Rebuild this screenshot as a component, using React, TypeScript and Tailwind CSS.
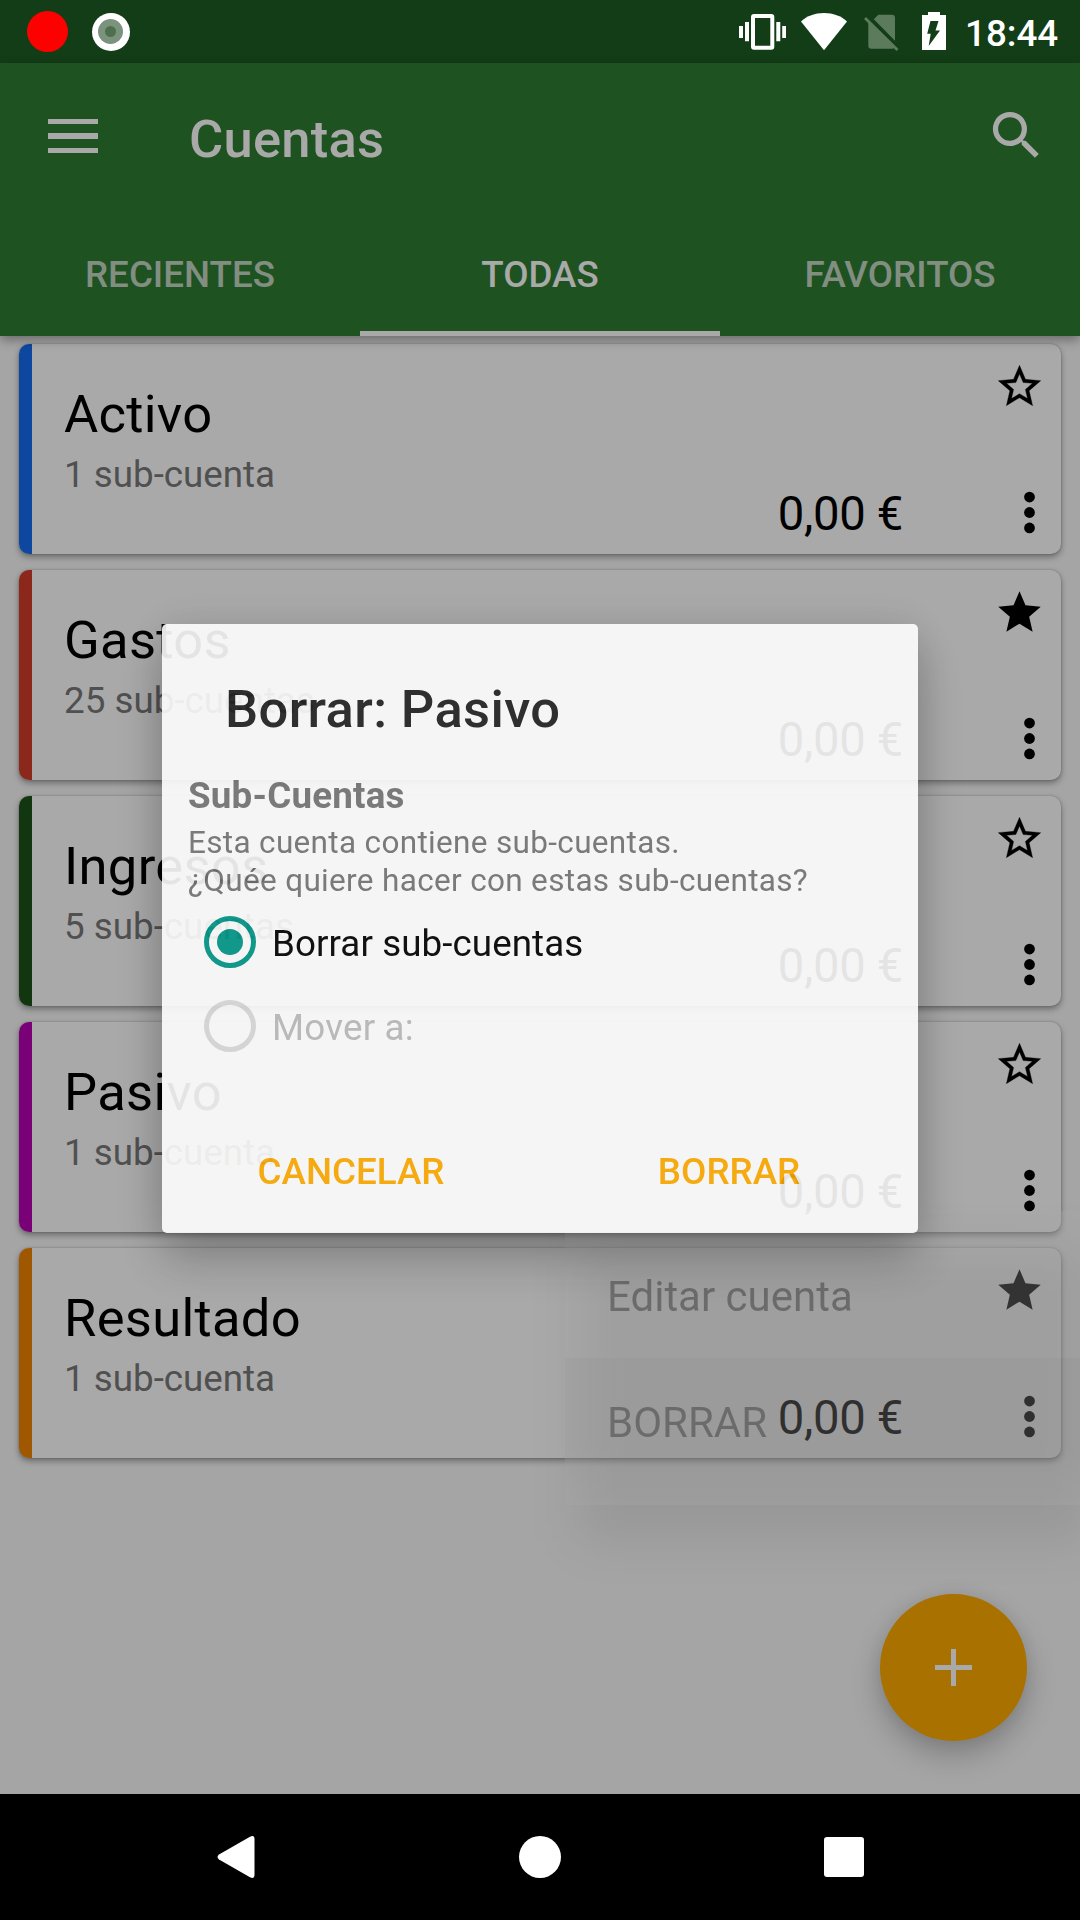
import React from "react";

type Account = {
  name: string;
  sub: string;
  bar: string;
  favorite: boolean;
};

const accounts: Account[] = [
  { name: "Activo", sub: "1 sub-cuenta", bar: "bg-[#0e479f]", favorite: false },
  { name: "Gastos", sub: "25 sub-cuentas", bar: "bg-[#8b281b]", favorite: true },
  { name: "Ingresos", sub: "5 sub-cuentas", bar: "bg-[#12360f]", favorite: false },
  { name: "Pasivo", sub: "1 sub-cuenta", bar: "bg-[#7a0077]", favorite: false },
  { name: "Resultado", sub: "1 sub-cuenta", bar: "bg-[#a05800]", favorite: true },
];

function StatusBar() {
  return (
    <div className="flex h-[63px] items-start bg-[#133d16]">
      <div className="ml-[27px] mt-[11px] size-[41px] rounded-full bg-[#ff0000]" />
      <div className="ml-[23.500px] mt-[12.500px] flex size-[38px] items-center justify-center rounded-full bg-white">
        <div className="flex size-[25px] items-center justify-center rounded-full bg-[#7b927c]">
          <div className="size-[11px] rounded-full bg-[#4e6f4e]" />
        </div>
      </div>
      <svg className="ml-[609.500px] mt-[13px] h-[38px] w-[47px] shrink-0" viewBox="739 13 47 38" fill="#fff">
        <path fillRule="evenodd" d="M754 14h17.300a3 3 0 0 1 3 3v29.700a3 3 0 0 1-3 3h-17.300a3 3 0 0 1-3-3V17a3 3 0 0 1 3-3zM755 18v27.700h15.300V18z" />
        <path d="M745 22h4v19.300h-4zM739 26h4v12h-4zM776.300 22h4v19.300h-4zM782.200 26h4v12h-4z" />
      </svg>
      <svg className="ml-[15px] mt-[13px] h-[38px] w-[46px] shrink-0" viewBox="801 13 46 38" fill="#fff">
        <path d="M824 50.300L801 21.400C807 16 815 13 824 13s17 3 23 8.400z" />
      </svg>
      <svg className="ml-[17px] mt-[13px] h-[39px] w-[35px] shrink-0" viewBox="864 13 35 39" fill="#5c7b5d">
        <path d="M873.800 19.200L878.300 14.700H892a3 3 0 0 1 3 3v23zM868.300 22.300L894.200 47.700a3 3 0 0 1-2.200 1H871.300a3 3 0 0 1-3-3z" />
        <path d="M864 18.900L866 16.900L898.500 49L896.500 51z" />
      </svg>
      <svg className="ml-[23px] mt-[12px] h-[38px] w-[24px] shrink-0" viewBox="922 12 24 38">
        <path fill="#fff" d="M928 12h12v3h6v35h-24V15h6z" />
        <path fill="#133d16" d="M930.500 21h8l-3 9.500h4.500l-11.300 15.500l2-12.300h-3.500z" />
      </svg>
      <span className="ml-[19px] w-[100px] whitespace-nowrap text-[36.750px] leading-[67px] font-medium text-white">18:44</span>
    </div>
  );
}

function Toolbar() {
  return (
    <header className="relative z-10 h-[273px] bg-[#1f5221] text-[#a9a9a9] shadow-[0_4px_10px_rgba(0,0,0,0.35)]">
      <div className="flex h-[153px] items-start">
        <div className="ml-[48px] mt-[56px] flex flex-col gap-[9px]">
          <div className="h-[5.300px] w-[49.500px] bg-[#a9a9a9]" />
          <div className="h-[5.300px] w-[49.500px] bg-[#a9a9a9]" />
          <div className="h-[5.300px] w-[49.500px] bg-[#a9a9a9]" />
        </div>
        <h1 className="ml-[91.500px] text-[52.500px] leading-[152px] font-medium tracking-[0.250px]">Cuentas</h1>
        <svg className="mr-[32px] mt-[41px] ml-auto size-[63px]" viewBox="0 0 24 24" fill="currentColor">
          <path d="M15.500 14h-.79l-.28-.27A6.471 6.471 0 0 0 16 9.500 6.500 6.500 0 1 0 9.500 16c1.610 0 3.090-.59 4.230-1.570l.27.28v.79l5 4.990L20.490 19l-4.990-5zm-6 0C7.010 14 5 11.990 5 9.500S7.010 5 9.500 5 14 7.010 14 9.500 11.990 14 9.500 14z" />
        </svg>
      </div>
      <nav className="grid h-[120px] grid-cols-3 grid-rows-[120px] text-center text-[36.750px] leading-[117px] font-medium">
        <div className="text-[#818e81]">RECIENTES</div>
        <div className="border-b-[5px] border-[#a9a9a9]">TODAS</div>
        <div className="text-[#818e81]">FAVORITOS</div>
      </nav>
    </header>
  );
}

function Star({ filled }: { filled: boolean }) {
  return (
    <svg className="size-[51px]" viewBox="0 0 24 24" fill="#000">
      {filled ? (
        <path d="M12 17.270L18.180 21l-1.640-7.030L22 9.240l-7.190-.61L12 2 9.190 8.630 2 9.240l5.460 4.730L5.820 21z" />
      ) : (
        <path
          stroke="#000"
          strokeWidth="0.150"
          d="M22 9.240l-7.190-.62L12 2 9.190 8.630 2 9.240l5.460 4.730L5.820 21 12 17.270 18.180 21l-1.630-7.030L22 9.240zM12 15.400l-3.760 2.270 1-4.280-3.320-2.880 4.380-.38L12 6.100l1.710 4.040 4.380.38-3.320 2.880 1 4.280L12 15.400z"
        />
      )}
    </svg>
  );
}

function AccountCard({ account }: { account: Account }) {
  return (
    <article className="flex h-[210px] rounded-[10px] bg-[#a9a9a9] shadow-[0_3px_6px_rgba(0,0,0,0.36),0_0_2px_rgba(0,0,0,0.25)]">
      <div className={"w-[13px] rounded-l-[10px] " + account.bar} />
      <div className="flex-1 pl-[32px] pt-[39px]">
        <h2 className="text-[52.500px] leading-[62px] tracking-[0.300px] text-black">{account.name}</h2>
        <p className="text-[36.750px] leading-[60px] text-[#505050]">{account.sub}</p>
      </div>
      <div className="pt-[140px] text-[47.250px] leading-[60px] tracking-[-0.350px] text-black">0,00 €</div>
      <div className="ml-[91px] flex w-[67px] flex-col pt-[17px]">
        <Star filled={account.favorite} />
        <svg className="mt-[68.500px] ml-[4px] size-[63px]" viewBox="0 0 24 24" fill="#000">
          <circle cx="12" cy="6.100" r="2.050" />
          <circle cx="12" cy="12" r="2.050" />
          <circle cx="12" cy="17.900" r="2.050" />
        </svg>
      </div>
    </article>
  );
}

function FadingMenu() {
  return (
    <div className="absolute top-[1211px] left-[565px] h-[294px] w-[515px]">
      <div className="absolute top-[36px] right-[-10px] bottom-[-36px] left-[14px] bg-black/8 blur-[24px]" />
      <div className="absolute inset-0 bg-[#a9a9a9] pt-[21px] text-[42px] text-black opacity-30">
        <div className="h-[126px] pl-[42px] leading-[129px]">Editar cuenta</div>
        <div className="h-[147px] bg-linear-to-b from-black/8 from-60% to-transparent pl-[42px] leading-[129px]">BORRAR</div>
      </div>
    </div>
  );
}

function DeleteDialog() {
  return (
    <div
      role="dialog"
      className="absolute top-[624px] left-[162px] h-[609px] w-[756px] rounded-[5px] bg-white opacity-[0.893] shadow-[0_26px_48px_rgba(0,0,0,0.26),0_0_44px_rgba(0,0,0,0.1)]"
    >
      <h2 className="pt-[54px] pl-[63px] text-[52.500px] leading-[62px] font-medium tracking-[0.370px] text-[#212121]">Borrar: Pasivo</h2>
      <div className="mt-[34px] pl-[26px] text-[#757575]">
        <h3 className="text-[36.750px] leading-[43px] font-bold tracking-[0.200px]">Sub-Cuentas</h3>
        <p className="mt-[7px] text-[31.500px] leading-[38px] tracking-[0.330px]">
          Esta cuenta contiene sub-cuentas.
          <br />
          ¿Quée quiere hacer con estas sub-cuentas?
        </p>
      </div>
      <div className="pl-[42px] text-[36.750px] leading-[87px] tracking-[0.080px]">
        <div className="flex h-[84px] items-center">
          <div className="flex size-[52px] items-center justify-center rounded-full border-[5.250px] border-[#009688]">
            <div className="size-[26px] rounded-full bg-[#009688]" />
          </div>
          <span className="pt-[2px] pl-[16px] text-black">Borrar sub-cuentas</span>
        </div>
        <div className="flex h-[84px] items-center">
          <div className="size-[52px] rounded-full border-[5.250px] border-[#dadada]" />
          <span className="pt-[2px] pl-[16px] tracking-[0.200px] text-[#bcbcbc]">Mover a:</span>
        </div>
      </div>
      <div className="grid h-[126px] grid-cols-2 pt-[40px] text-center text-[36.750px] leading-[127px] font-medium text-[#ffab00]">
        <div>CANCELAR</div>
        <div>BORRAR</div>
      </div>
    </div>
  );
}

export default function App() {
  return (
    <div className="relative flex h-[1920px] w-[1080px] flex-col overflow-hidden bg-[#a5a5a5] font-[Roboto,sans-serif]">
      <StatusBar />
      <Toolbar />
      <main className="flex flex-1 flex-col gap-[16px] px-[19px] pt-[8px]">
        {accounts.map((account) => (
          <AccountCard key={account.name} account={account} />
        ))}
      </main>
      <button className="absolute top-[1594px] left-[880px] flex size-[147px] items-center justify-center rounded-full bg-[#a97100] shadow-[0_14px_30px_rgba(0,0,0,0.23),0_0_16px_rgba(0,0,0,0.06)]">
        <svg className="size-[37px]" viewBox="0 0 37 37" fill="#a9a9a9">
          <path d="M16 0h5v16h16v5H21v16h-5V21H0v-5h16z" />
        </svg>
      </button>
      <FadingMenu />
      <DeleteDialog />
      <footer className="relative flex h-[126px] items-center bg-black text-white">
        <svg className="ml-[217px] h-[42px] w-[38px]" viewBox="0 0 38 42" fill="currentColor">
          <path d="M33 .7q4.500-2 4.500 2.500v35.600q0 4.500-4.500 2.500L2 23.500q-3-2.500 0-5z" />
        </svg>
        <div className="ml-[264px] size-[42px] rounded-full bg-white" />
        <div className="ml-[263px] size-[40px] rounded-[3px] bg-white" />
      </footer>
    </div>
  );
}
